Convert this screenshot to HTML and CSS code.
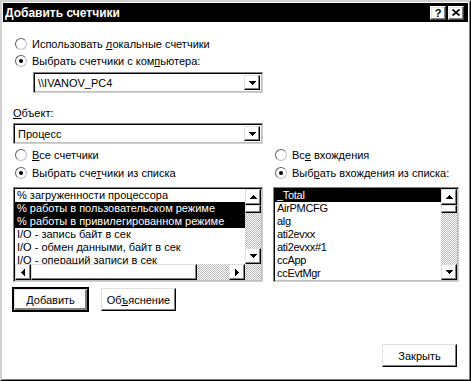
FILE: index.html
```html
<!DOCTYPE html>
<html>
<head>
  <meta charset="utf-8">
  <title>Добавить счетчики</title>
  <link rel="stylesheet" href="styles.css">
</head>
<body>
  <div class="dialog">
    <div class="titlebar">
      <span class="title">Добавить счетчики</span>
      <div class="title-buttons">
        <span class="tbtn help">?</span>
        <span class="tbtn"><svg width="8" height="7" viewBox="0 0 8 7"><path d="M0.5 0.5l7 6M7.5 0.5l-7 6" stroke="#000" stroke-width="1.7"/></svg></span>
      </div>
    </div>

    <div class="content">
      <div class="radio"><span class="circle"></span><span>Использовать <u>л</u>окальные счетчики</span></div>
      <div class="radio"><span class="circle checked"></span><span>Выбрать счетчики с ком<u>п</u>ьютера:</span></div>

      <div class="combo combo-computer">
        <span class="combo-text">\\IVANOV_PC4</span>
        <span class="raised drop-btn"><svg width="7" height="4" shape-rendering="crispEdges"><path d="M0 0h7v1h-1v1h-1v1h-1v1h-1v-1h-1v-1h-1v-1h-1z"/></svg></span>
      </div>

      <div class="field-label"><u>О</u>бъект:</div>
      <div class="combo combo-object">
        <span class="combo-text">Процесс</span>
        <span class="raised drop-btn"><svg width="7" height="4" shape-rendering="crispEdges"><path d="M0 0h7v1h-1v1h-1v1h-1v1h-1v-1h-1v-1h-1v-1h-1z"/></svg></span>
      </div>

      <div class="columns">
        <div class="column">
          <div class="radio tall"><span class="circle"></span><span><u>В</u>се счетчики</span></div>
          <div class="radio tall"><span class="circle checked"></span><span>Выбрать сче<u>т</u>чики из списка</span></div>
          <div class="listbox counters">
            <div class="items">
              <div class="item">% загруженности процессора</div>
              <div class="item selected">% работы в пользовательском режиме</div>
              <div class="item selected">% работы в привилегированном режиме</div>
              <div class="item">I/O - запись байт в сек</div>
              <div class="item">I/O - обмен данными, байт в сек</div>
              <div class="item">I/O - операций записи в сек</div>
            </div>
            <div class="vscroll">
              <span class="raised arrow"><svg width="7" height="4" shape-rendering="crispEdges"><path d="M3 0h1v1h1v1h1v1h1v1h-7v-1h1v-1h1v-1h1z"/></svg></span>
              <span class="raised thumb-v"></span>
              <span class="track"></span>
              <span class="raised arrow"><svg width="7" height="4" shape-rendering="crispEdges"><path d="M0 0h7v1h-1v1h-1v1h-1v1h-1v-1h-1v-1h-1v-1h-1z"/></svg></span>
            </div>
            <div class="hscroll">
              <span class="raised arrow"><svg width="4" height="7" shape-rendering="crispEdges"><path d="M3 0h1v7h-1v-1h-1v-1h-1v-1h-1v-1h1v-1h1v-1h1z"/></svg></span>
              <span class="raised thumb-h"></span>
              <span class="track"></span>
              <span class="raised arrow"><svg width="4" height="7" shape-rendering="crispEdges"><path d="M0 0h1v1h1v1h1v1h1v1h-1v1h-1v1h-1v1h-1z"/></svg></span>
            </div>
            <div class="corner"></div>
          </div>
        </div>

        <div class="column">
          <div class="radio tall"><span class="circle"></span><span>Вс<u>е</u> вхождения</span></div>
          <div class="radio tall"><span class="circle checked"></span><span>Выб<u>р</u>ать вхождения из списка:</span></div>
          <div class="listbox instances">
            <div class="items">
              <div class="item selected">_Total</div>
              <div class="item">AirPMCFG</div>
              <div class="item">alg</div>
              <div class="item">ati2evxx</div>
              <div class="item">ati2evxx#1</div>
              <div class="item">ccApp</div>
              <div class="item">ccEvtMgr</div>
            </div>
            <div class="vscroll">
              <span class="raised arrow"><svg width="7" height="4" shape-rendering="crispEdges"><path d="M3 0h1v1h1v1h1v1h1v1h-7v-1h1v-1h1v-1h1z"/></svg></span>
              <span class="raised thumb-v"></span>
              <span class="track"></span>
              <span class="raised arrow"><svg width="7" height="4" shape-rendering="crispEdges"><path d="M0 0h7v1h-1v1h-1v1h-1v1h-1v-1h-1v-1h-1v-1h-1z"/></svg></span>
            </div>
          </div>
        </div>
      </div>

      <div class="button-row">
        <span class="button default">Добавить</span>
        <span class="button"><span>Об<u>ъ</u>яснение</span></span>
      </div>

      <div class="footer">
        <span class="button">Закрыть</span>
      </div>
    </div>
  </div>
</body>
</html>
```

FILE: styles.css
```css
body {
  margin: 0;
  background-color: #fff;
  font-family: "Liberation Sans", Arial, sans-serif;
  font-size: 11px;
  color: #000;
}

u {
  text-decoration-thickness: 1px;
  text-underline-offset: 1px;
}

.dialog {
  width: 471px;
  height: 381px;
  box-sizing: border-box;
  border: 1px solid;
  border-color: #d0d0d0 #000 #000 #d0d0d0;
  box-shadow: inset 1px 1px 0 #d0d0d0, inset -1px -1px 0 #808080;
  padding: 2px;
  background-color: #fff;
}

.titlebar {
  height: 19px;
  background-color: #000;
  color: #fff;
  display: flex;
  align-items: center;
  justify-content: space-between;
  padding: 0 4px 0 2px;
}

.title {
  font-weight: bold;
  font-size: 12px;
}

.title-buttons {
  display: flex;
  gap: 2px;
}

.tbtn {
  width: 14px;
  height: 12px;
  background-color: #fff;
  border: 1px solid;
  border-color: #fff #404040 #404040 #fff;
  box-shadow: inset -1px -1px 0 #808080, inset 1px 1px 0 #e0e0e0;
  color: #000;
  display: flex;
  align-items: center;
  justify-content: center;
  font-weight: bold;
  font-size: 11px;
}

.content {
  padding: 13px 9px 0 10px;
}

.radio {
  height: 17px;
  display: flex;
  align-items: center;
  white-space: nowrap;
}

.radio.tall {
  height: 18px;
}

.circle {
  width: 10px;
  height: 10px;
  margin: 0 5px 0 2px;
  border: 1px solid;
  border-color: #606060 #c0c0c0 #c0c0c0 #606060;
  border-radius: 50%;
  background-color: #fff;
  display: flex;
  align-items: center;
  justify-content: center;
  flex-shrink: 0;
}

.circle.checked::after {
  content: "";
  width: 4px;
  height: 4px;
  border-radius: 50%;
  background-color: #000;
}

.raised {
  background-color: #fff;
  border: 1px solid;
  border-color: #e0e0e0 #000 #000 #e0e0e0;
  box-shadow: inset -1px -1px 0 #808080;
  box-sizing: border-box;
  display: flex;
  align-items: center;
  justify-content: center;
}

.combo {
  height: 21px;
  box-sizing: border-box;
  border: 1px solid;
  border-color: #808080 #d0d0d0 #d0d0d0 #808080;
  padding: 1px;
  box-shadow: inset 1px 1px 0 #000, inset -1px -1px 0 #c0c0c0;
  display: flex;
  align-items: stretch;
}

.combo-text {
  flex: 1;
  display: flex;
  align-items: center;
  padding-left: 2px;
  margin: 1px 0 0 1px;
}

.combo-computer {
  width: 230px;
  margin: 3px 0 0 20px;
}

.combo-object {
  width: 250px;
  margin-top: 3px;
}

.drop-btn {
  width: 16px;
  margin: 1px 1px 1px 0;
}

.field-label {
  height: 13px;
  line-height: 13px;
  margin-top: 14px;
}

.columns {
  display: grid;
  grid-template-columns: 250px 186px;
  column-gap: 10px;
  margin-top: 2px;
}

.listbox {
  height: 95px;
  box-sizing: border-box;
  margin-top: 5px;
  border: 1px solid;
  border-color: #808080 #d0d0d0 #d0d0d0 #808080;
  padding: 1px;
  box-shadow: inset 1px 1px 0 #000, inset -1px -1px 0 #c0c0c0;
  display: grid;
  grid-template-columns: 1fr 16px;
}

.listbox.counters {
  grid-template-rows: 1fr 16px;
}

.items {
  overflow: hidden;
}

.item {
  height: 13px;
  line-height: 13px;
  padding-left: 2px;
  white-space: nowrap;
}

.item.selected {
  background-color: #000;
  color: #fff;
}

.instances .item {
  letter-spacing: -0.3px;
}

.vscroll {
  display: flex;
  flex-direction: column;
}

.hscroll {
  display: flex;
}

.arrow {
  width: 16px;
  height: 16px;
  flex-shrink: 0;
}

.thumb-v {
  height: 8px;
}

.thumb-h {
  width: 166px;
}

.track,
.corner {
  flex: 1;
  background: repeating-conic-gradient(#b8b8b8 0 25%, #fff 0 50%) 0 0 / 2px 2px;
}

.button-row {
  display: flex;
  gap: 13px;
  margin-top: 6px;
}

.button {
  width: 75px;
  height: 23px;
  box-sizing: border-box;
  background-color: #fff;
  border: 1px solid;
  border-color: #e0e0e0 #000 #000 #e0e0e0;
  box-shadow: inset -1px -1px 0 #808080, inset 1px 1px 0 #fff;
  display: flex;
  align-items: center;
  justify-content: center;
}

.button.default {
  outline: 1px solid #000;
  outline-offset: 0;
  border-color: #000;
  box-shadow: inset 1px 1px 0 #e0e0e0, inset -2px -2px 0 #808080;
}

.footer {
  display: flex;
  justify-content: flex-end;
  margin: 33px 2px 0 0;
}
```
